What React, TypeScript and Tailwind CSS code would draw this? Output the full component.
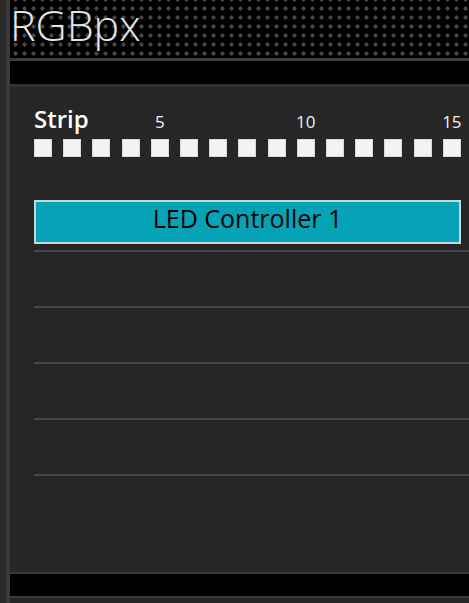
import React from 'react';

const cells = Array.from({ length: 15 }, (_, i) => i + 1);

const font = { fontFamily: '"Open Sans", "Noto Sans", sans-serif' };

export default function App() {
  return (
    <div className="flex h-[603px] w-full overflow-hidden bg-[#262626]" style={font}>
      {/* left edge */}
      <div className="w-[6px] bg-[#2a2a2a]" />
      <div className="w-[4px] bg-[#3b3b3b]" />

      <div className="flex flex-1 flex-col">
        {/* header with dot grid */}
        <div className="h-[58px] bg-black bg-[radial-gradient(circle,#464646_1.9px,transparent_2.3px)] bg-[size:9px_9px] bg-[position:1px_4px]">
          <div className="text-[43px] font-light leading-[50px] text-[#e4e4e4]">RGBpx</div>
        </div>
        <div className="h-[3px] bg-[#3c3c3c]" />
        <div className="h-[23px] bg-black" />
        <div className="h-[3px] bg-[#333333]" />

        {/* main panel */}
        <div className="flex-1 overflow-hidden border-l border-[#2d2d2d] ml-[3px] pl-[20px] pt-[16px]">
          <div className="flex h-[32px] w-[427px] items-baseline justify-between">
            {cells.map((n) => (
              <div
                key={n}
                className={
                  n === 1
                    ? 'flex w-[18px] justify-start overflow-visible whitespace-nowrap'
                    : 'flex w-[18px] justify-center overflow-visible whitespace-nowrap'
                }
              >
                {n === 1 ? (
                  <span className="text-[24px] font-semibold leading-[32px] text-white">Strip</span>
                ) : n % 5 === 0 ? (
                  <span className="text-[17px] leading-[32px] text-[#f0f0f0]">{n}</span>
                ) : null}
              </div>
            ))}
          </div>

          <div className="mt-[4px] flex w-[427px] justify-between">
            {cells.map((n) => (
              <div key={n} className="h-[18px] w-[18px] border border-[#d8d8d8] bg-[#f3f3f3]" />
            ))}
          </div>

          <div className="mt-[39px]">
            <div className="h-[56px] border-b-2 border-[#474747] pt-[4px]">
              <div className="flex h-[44px] w-[427px] items-center justify-center border-2 border-[#c6d7db] bg-[#06a3b7] pb-[6px] text-[25px] text-black">
                LED Controller 1
              </div>
            </div>
            {[1, 2, 3, 4].map((r) => (
              <div key={r} className="h-[56px] border-b-2 border-[#474747]" />
            ))}
          </div>
        </div>

        <div className="h-[2px] bg-[#3a3a3a]" />
        <div className="h-[22px] bg-black" />
        <div className="h-[2px] bg-[#3a3a3a]" />
        <div className="h-[5px] bg-[#262626]" />
      </div>
    </div>
  );
}
